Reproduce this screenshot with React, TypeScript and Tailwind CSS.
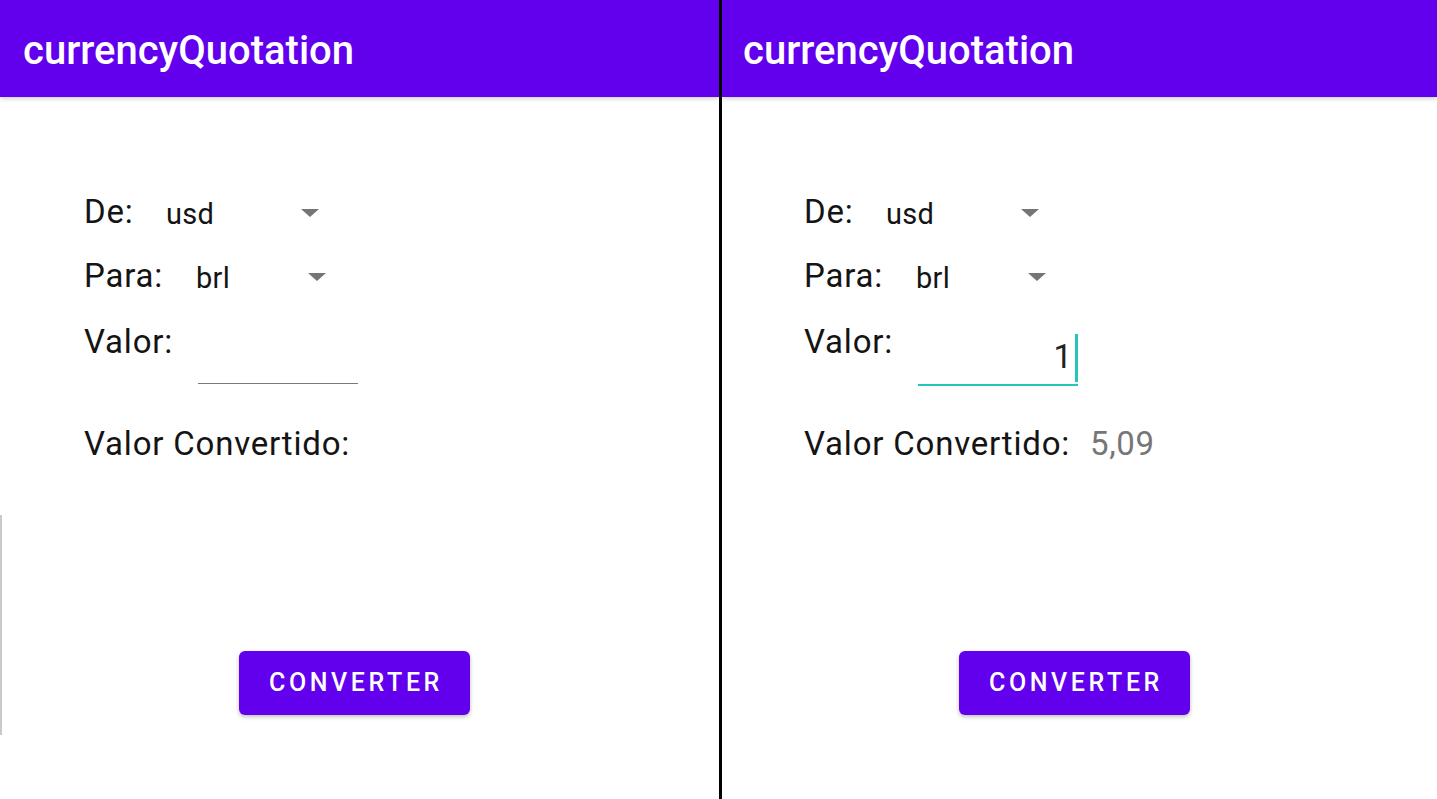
import React from "react";

const font = { fontFamily: "Roboto, 'Noto Sans', sans-serif" };

function Arrow() {
  return (
    <svg width="18" height="8" viewBox="0 0 18 8" className="shrink-0 self-center">
      <path d="M0 0 L18 0 L9 8 Z" fill="#757575" />
    </svg>
  );
}

function Panel({ filled }: { filled: boolean }) {
  return (
    <div className="flex flex-col h-full">
      <div
        className={
          "h-[97px] bg-[#6200ee] flex items-center shadow-[0_2px_4px_rgba(0,0,0,0.18)] z-10 " +
          (filled ? "pl-[21px]" : "pl-[23px]")
        }
      >
        <span className="text-white text-[40px] font-medium leading-none translate-y-[2px]">currencyQuotation</span>
      </div>
      <div
        className={
          "flex flex-col text-[33px] leading-[36px] tracking-[0.8px] text-[#141414] " +
          (filled ? "pl-[82px]" : "pl-[84px]")
        }
      >
        <div className="mt-[97px] h-[36px] flex items-baseline">
          <div className="w-[82px]">De:</div>
          <div className="w-[153px] h-[36px] flex items-baseline justify-between">
            <span className="text-[29px] tracking-[0.3px] translate-y-[1px]">usd</span>
            <Arrow />
          </div>
        </div>
        <div className="mt-[28px] h-[36px] flex items-baseline">
          <div className="w-[112px]">Para:</div>
          <div className="w-[130px] h-[36px] flex items-baseline justify-between">
            <span className="text-[29px] tracking-[0.3px] translate-y-[1px]">brl</span>
            <Arrow />
          </div>
        </div>
        <div className="mt-[30px] h-[62px] flex items-start">
          <div className="w-[114px] h-[36px]">Valor:</div>
          {filled ? (
            <div className="w-[160px] h-[62px] border-b-[2px] border-[#22c6bb] flex items-end justify-end pb-[9px]">
              <span className="text-[33px] leading-[36px] tracking-normal text-[#222]">1</span>
              <div className="w-[3px] h-[48px] bg-[#22c6bb] ml-[3px] mb-[-7px]" />
            </div>
          ) : (
            <div className="w-[160px] h-[60px] border-b border-[#7a7a7a]" />
          )}
        </div>
        <div className="mt-[40px] h-[36px] flex items-baseline">
          <span>Valor Convertido:</span>
          {filled && <span className="ml-[20px] text-[33px] tracking-[0.6px] text-[#767676]">5,09</span>}
        </div>
        <div className="mt-[189px] ml-[155px]">
          <button className="w-[231px] h-[64px] rounded-[6px] bg-[#6200ee] text-white text-[25px] font-medium tracking-[3.6px] shadow-[0_2px_4px_rgba(0,0,0,0.25)] flex items-center justify-center pl-[3px]">
            CONVERTER
          </button>
        </div>
      </div>
    </div>
  );
}

export default function App() {
  return (
    <div className="w-[1437px] h-[799px] bg-white flex overflow-hidden relative" style={font}>
      <div className="w-[719px] h-full">
        <Panel filled={false} />
      </div>
      <div className="w-[3px] h-full bg-black z-20" />
      <div className="flex-1 h-full">
        <Panel filled={true} />
      </div>
      <div className="absolute left-0 top-[515px] w-[2px] h-[220px] bg-[#c9c9c9]" />
    </div>
  );
}
